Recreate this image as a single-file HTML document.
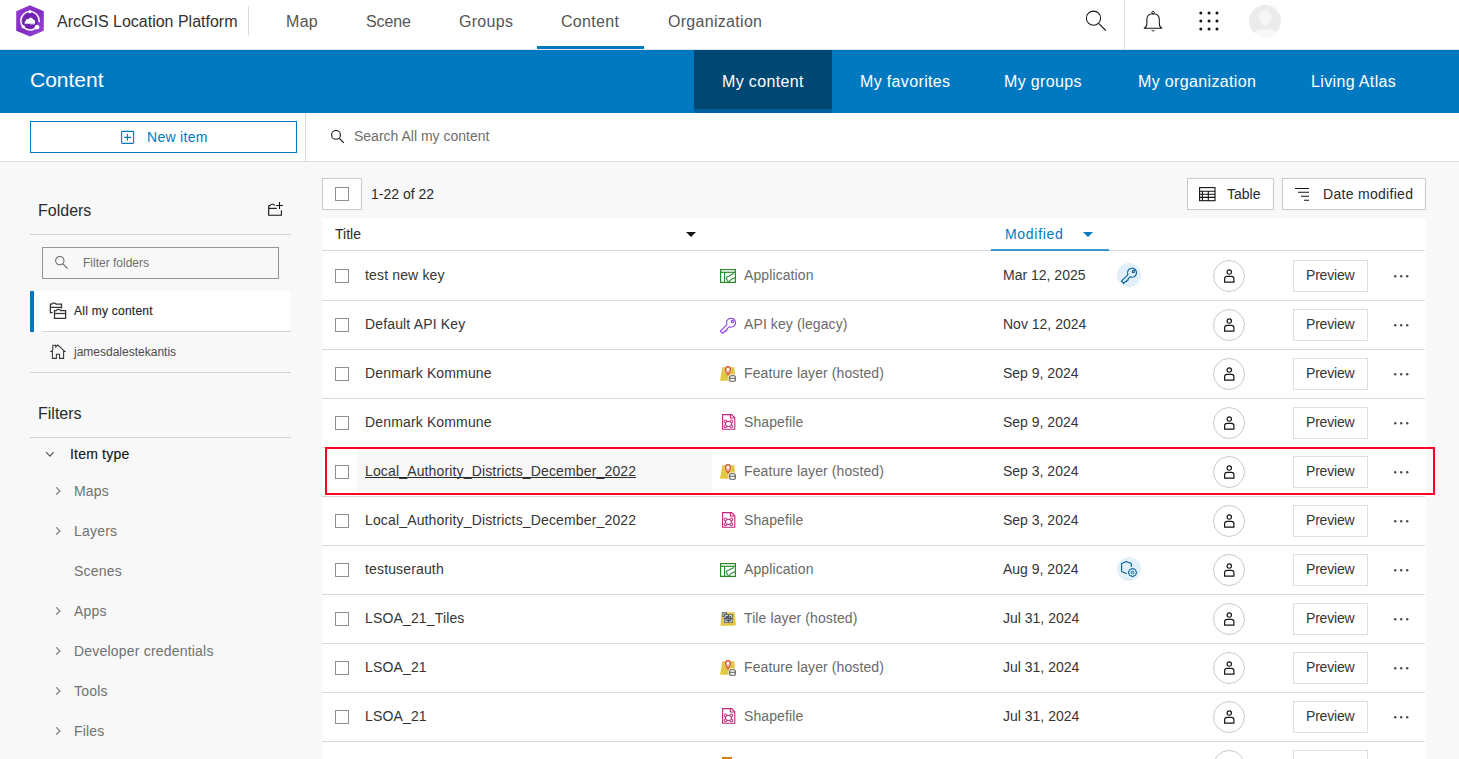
<!DOCTYPE html>
<html><head><meta charset="utf-8">
<style>
*{box-sizing:border-box;margin:0;padding:0}
html,body{width:1459px;height:759px;overflow:hidden;background:#f8f8f8;font-family:"Liberation Sans",sans-serif;color:#2a2a2a}
.a{position:absolute}
.t{position:absolute;white-space:nowrap;line-height:22px;height:22px}
svg{position:absolute;overflow:visible;z-index:1}
#hdr{left:0;top:0;width:1459px;height:50px;background:#fff;border-bottom:1px solid #e4e4e4}
.nav{font-size:16px;color:#555;letter-spacing:0.3px}
#sub{left:0;top:50px;width:1459px;height:63px;background:#0079c1}
.sn{font-size:16px;color:#fff;letter-spacing:0.35px}
#tb{left:0;top:113px;width:1459px;height:49px;background:#fff;border-bottom:1px solid #dfdfdf}
.f16{font-size:16px}
.f14{font-size:14px}
.f12{font-size:12px}
.hl{position:absolute;height:1px;background:#dadada}
.btn{position:absolute;background:#fff;border:1px solid #c9c9c9}
.cb{position:absolute;width:14px;height:14px;border:1px solid #8f8f8f;background:#fff}
.title{font-size:14px;color:#353535;letter-spacing:0.15px}
.type{font-size:14px;color:#6a6a6a;letter-spacing:0.1px}
.date{font-size:14px;color:#353535}
.share{position:absolute;width:32px;height:32px;border:1px solid #cacaca;border-radius:50%;background:#fff}
.prev{position:absolute;width:75px;height:32px;border:1px solid #dfdfdf;background:#fff}
.badge{position:absolute;width:24px;height:24px;border-radius:50%;background:#e2f0fa}
.fi{font-size:14px;color:#717171;letter-spacing:0.2px}
</style></head><body>

<!-- header -->
<div id="hdr" class="a"></div>
<div class="t nav" style="left:57px;top:11px;color:#323232;letter-spacing:0">ArcGIS Location Platform</div>
<div class="a" style="left:248px;top:6px;width:1px;height:30px;background:#dcdcdc"></div>
<div class="t nav" style="left:286px;top:11px">Map</div>
<div class="t nav" style="left:366px;top:11px;letter-spacing:-0.1px">Scene</div>
<div class="t nav" style="left:459px;top:11px">Groups</div>
<div class="t nav" style="left:561px;top:11px">Content</div>
<div class="t nav" style="left:668px;top:11px">Organization</div>
<div class="a" style="left:537px;top:46px;width:107px;height:3px;background:#0079c1"></div>
<div class="a" style="left:1124px;top:0;width:1px;height:49px;background:#e0e0e0"></div>


<svg style="left:0;top:0" width="60" height="45" viewBox="0 0 60 45">
<defs><linearGradient id="lg" x1="0" y1="0" x2="1" y2="1"><stop offset="0" stop-color="#9a3fd6"/><stop offset="0.5" stop-color="#7f2bc0"/><stop offset="1" stop-color="#9c48dc"/></linearGradient></defs>
<path d="M30 5.3 L43.8 11.3 L43.8 30.8 L30 36.6 L16.2 30.8 L16.2 11.3 Z" fill="url(#lg)"/>
<circle cx="30" cy="20.8" r="7.6" fill="#6f23ad"/>
<path d="M25.3 23.8 C24.3 23.6 24.2 21.6 25.6 21.2 C25.7 19.4 27.3 18.6 28.5 19.2 C29.4 17.3 32.5 17.4 33.2 19.6 C34.8 19.6 35.7 21.4 34.8 23.8 Z" fill="#fff"/>
<path d="M30 24.2 L34.9 24.2" stroke="#fff" stroke-width="0.5"/>
<circle cx="30" cy="20.8" r="9.2" fill="none" stroke="#fff" stroke-width="1.5" pathLength="360" stroke-dasharray="8 24 328"/>
<circle cx="30" cy="11.6" r="1.6" fill="#fff"/>
<circle cx="23.2" cy="26.8" r="1.7" fill="#fff"/>
<circle cx="37" cy="27.2" r="2.4" fill="#fff"/>
</svg>
<svg style="left:1080px;top:5px" width="30" height="30" viewBox="0 0 30 30">
<circle cx="13.5" cy="13.2" r="7.1" fill="none" stroke="#151515" stroke-width="1.05"/>
<path d="M18.6 18.4 L25.8 25.5" stroke="#151515" stroke-width="1.1"/>
</svg>
<svg style="left:1140px;top:5px" width="26" height="30" viewBox="0 0 26 30">
<circle cx="13.1" cy="7.7" r="1.3" fill="none" stroke="#151515" stroke-width="1"/>
<path d="M4.2 23.3 L21.8 23.3 C19.6 22.2 19.3 20.5 19.3 18.5 L19.3 14.2 C19.3 10.8 16.8 8.7 13.1 8.7 C9.4 8.7 6.9 10.8 6.9 14.2 L6.9 18.5 C6.9 20.5 6.6 22.2 4.2 23.3 Z" fill="none" stroke="#151515" stroke-width="1.05" stroke-linejoin="round"/>
<path d="M11.6 25.4 Q13.1 26.6 14.6 25.4" fill="none" stroke="#151515" stroke-width="0.9"/>
</svg>
<svg style="left:1195px;top:7px" width="28" height="28" viewBox="0 0 28 28">
<g fill="#151515"><circle cx="5.8" cy="6" r="1.5"/><circle cx="14" cy="6" r="1.5"/><circle cx="22" cy="6" r="1.5"/><circle cx="5.8" cy="14" r="1.5"/><circle cx="14" cy="14" r="1.5"/><circle cx="22" cy="14" r="1.5"/><circle cx="5.8" cy="22" r="1.5"/><circle cx="14" cy="22" r="1.5"/><circle cx="22" cy="22" r="1.5"/></g>
</svg>
<svg style="left:1249px;top:5px" width="32" height="32" viewBox="0 0 32 32">
<defs><clipPath id="avc"><circle cx="16" cy="16" r="16"/></clipPath></defs>
<circle cx="16" cy="16" r="16" fill="#ebebeb"/>
<g clip-path="url(#avc)">
<ellipse cx="16" cy="11.6" rx="6.8" ry="7.2" fill="#f3f3f3"/>
<ellipse cx="16" cy="13.6" rx="5" ry="6.8" fill="#f6f6f6"/>
<path d="M3 36 L4 29 C5 26 8.5 24.6 12 24.4 L20 24.4 C23.5 24.6 27 26 28 29 L29 36 Z" fill="#f8f8f8"/>
</g>
</svg>

<!-- sub nav -->
<div id="sub" class="a"></div>
<div class="a" style="left:694px;top:50px;width:138px;height:63px;background:#004874;border-bottom:4px solid #00609d"></div>
<div class="t" style="left:30px;top:69px;font-size:21px;color:#fff">Content</div>
<div class="t sn" style="left:722px;top:71px">My content</div>
<div class="t sn" style="left:860px;top:71px">My favorites</div>
<div class="t sn" style="left:1004px;top:71px">My groups</div>
<div class="t sn" style="left:1138px;top:71px">My organization</div>
<div class="t sn" style="left:1311px;top:71px">Living Atlas</div>

<!-- toolbar -->
<div id="tb" class="a"></div>
<div class="a" style="left:30px;top:121px;width:267px;height:32px;border:1px solid #0079c1"></div>
<div class="t f14" style="left:147px;top:126px;color:#0079c1;letter-spacing:0.3px">New item</div>
<div class="a" style="left:305px;top:113px;width:1px;height:48px;background:#d6d6d6"></div>
<div class="t f14" style="left:354px;top:125px;color:#6e6e6e">Search All my content</div>

<!-- left panel -->
<div class="t f16" style="left:38px;top:200px">Folders</div>
<div class="hl" style="left:30px;top:234px;width:261px;background:#d4d4d4"></div>
<div class="a" style="left:42px;top:247px;width:237px;height:32px;border:1px solid #959595"></div>
<div class="t f12" style="left:83px;top:252px;color:#6e6e6e">Filter folders</div>
<div class="a" style="left:30px;top:291px;width:261px;height:40px;background:#fff"></div>
<div class="a" style="left:30px;top:291px;width:4px;height:41px;background:#0079c1"></div>
<div class="t f12" style="left:74px;top:300px;-webkit-text-stroke:0.15px #151515;letter-spacing:0.25px">All my content</div>
<div class="hl" style="left:42px;top:331px;width:249px;background:#d4d4d4"></div>
<div class="t f12" style="left:74px;top:341px;color:#4a4a4a">jamesdalestekantis</div>
<div class="hl" style="left:30px;top:372px;width:261px;background:#d4d4d4"></div>
<div class="t f16" style="left:38px;top:403px">Filters</div>
<div class="hl" style="left:30px;top:437px;width:261px;background:#d4d4d4"></div>
<div class="t f14" style="left:70px;top:443px;-webkit-text-stroke:0.15px #151515;color:#151515;letter-spacing:0.2px">Item type</div>
<div class="t fi" style="left:74px;top:480px">Maps</div>
<div class="t fi" style="left:74px;top:520px">Layers</div>
<div class="t fi" style="left:74px;top:560px">Scenes</div>
<div class="t fi" style="left:74px;top:600px">Apps</div>
<div class="t fi" style="left:74px;top:640px">Developer credentials</div>
<div class="t fi" style="left:74px;top:680px">Tools</div>
<div class="t fi" style="left:74px;top:720px">Files</div>


<svg style="left:115px;top:125px" width="24" height="24" viewBox="0 0 24 24">
<rect x="6.6" y="6.4" width="12" height="12" rx="0.8" fill="none" stroke="#0079c1" stroke-width="1.1"/>
<path d="M12.4 9 L12.4 15.8 M9.3 12.4 L16 12.4" stroke="#0079c1" stroke-width="1.1"/>
</svg>
<svg style="left:325px;top:125px" width="25" height="25" viewBox="0 0 25 25">
<circle cx="11" cy="9.9" r="4.4" fill="none" stroke="#151515" stroke-width="1.1"/>
<path d="M14.3 13.3 L18.8 17.8" stroke="#151515" stroke-width="1.2"/>
</svg>
<svg style="left:258px;top:195px" width="34" height="30" viewBox="0 0 34 30">
<path d="M10.7 10.5 L10.7 20.2 L23.4 20.2 L23.4 15.2" fill="none" stroke="#151515" stroke-width="1.1"/>
<path d="M10.7 13.4 L18.8 13.4" stroke="#151515" stroke-width="1.1"/>
<path d="M10.7 10.6 L12 10.6 C12.4 9.6 12.8 9.3 14 9.3 L15.2 9.3 C16 9.3 16.3 9.7 16.4 10.6" fill="none" stroke="#151515" stroke-width="1.1"/>
<path d="M21.5 7.1 L21.5 13.9 M18.2 10.5 L25 10.5" stroke="#151515" stroke-width="1.1"/>
</svg>
<svg style="left:50px;top:251px" width="24" height="24" viewBox="0 0 24 24">
<circle cx="9.8" cy="9.6" r="4.2" fill="none" stroke="#6a6a6a" stroke-width="1.05"/>
<path d="M12.9 12.8 L17.6 17.6" stroke="#6a6a6a" stroke-width="1.1"/>
</svg>
<svg style="left:45px;top:298px" width="25" height="25" viewBox="0 0 25 25">
<g fill="none" stroke="#333" stroke-width="1.25">
<path d="M7.6 14.5 L5.4 14.5 L5.4 6 L6.8 6 C7.3 5.2 7.7 5 8.6 5 L9.6 5 C10.4 5 10.8 5.4 11.2 6.2 L16.5 6.2 L16.5 10.5"/>
<path d="M5.4 9.4 L16.5 9.4"/>
<path d="M9.5 12.5 L9.5 20.4 L20.6 20.4 L20.6 12.5 L15.6 12.5 C15.2 11.7 14.8 11.3 14 11.3 L13 11.3 C12 11.3 11.7 11.6 11.2 12.5 Z"/>
<path d="M9.5 15.5 L20.6 15.5"/>
</g>
</svg>
<svg style="left:45px;top:339px" width="25" height="25" viewBox="0 0 25 25">
<path d="M7.4 19.4 L7.4 12.4 L6.1 12.4 L7.8 10.8 L7.8 6.3 L10.7 6.3 L10.7 8 L12.8 6.1 L19.8 12.4 L18.6 12.4 L18.6 19.4 L14.5 19.4 L14.5 15.3 L11.4 15.3 L11.4 19.4 Z" fill="none" stroke="#3a3a3a" stroke-width="1.1" stroke-linejoin="miter"/>
</svg>
<svg style="left:40px;top:445px" width="20" height="20" viewBox="0 0 20 20">
<path d="M6.2 7.2 L9.9 11.2 L13.6 7.2" fill="none" stroke="#555" stroke-width="1.2"/>
</svg>
<svg style="left:1195px;top:183px" width="25" height="22" viewBox="0 0 25 22">
<g fill="none" stroke="#151515" stroke-width="1.1">
<rect x="4.6" y="4.6" width="15.4" height="13.1"/>
<path d="M4.8 8.3 L20.2 8.3 M4.8 11.3 L20.2 11.3 M4.8 14.4 L20.2 14.4 M7.4 8.3 L7.4 18 M13.3 8.3 L13.3 18"/>
</g>
</svg>
<svg style="left:1290px;top:183px" width="25" height="22" viewBox="0 0 25 22">
<path d="M5 5.5 L19 5.5 M8 9.3 L19 9.3 M11 13.3 L19 13.3 M14 17.3 L19 17.3" stroke="#151515" stroke-width="1.1"/>
</svg>
<svg style="left:680px;top:225px" width="20" height="20" viewBox="0 0 20 20">
<path d="M6 7 L16 7 L11 12 Z" fill="#151515"/>
</svg>
<svg style="left:1080px;top:225px" width="20" height="20" viewBox="0 0 20 20">
<path d="M3 7 L13 7 L8 12 Z" fill="#0079c1"/>
</svg>
<svg style="left:50px;top:480px" width="20" height="20" viewBox="0 0 20 20"><path d="M6.3 7.4 L10 11 L6.3 14.5" fill="none" stroke="#777" stroke-width="1.15"/></svg>
<svg style="left:50px;top:520px" width="20" height="20" viewBox="0 0 20 20"><path d="M6.3 7.4 L10 11 L6.3 14.5" fill="none" stroke="#777" stroke-width="1.15"/></svg>
<svg style="left:50px;top:600px" width="20" height="20" viewBox="0 0 20 20"><path d="M6.3 7.4 L10 11 L6.3 14.5" fill="none" stroke="#777" stroke-width="1.15"/></svg>
<svg style="left:50px;top:640px" width="20" height="20" viewBox="0 0 20 20"><path d="M6.3 7.4 L10 11 L6.3 14.5" fill="none" stroke="#777" stroke-width="1.15"/></svg>
<svg style="left:50px;top:680px" width="20" height="20" viewBox="0 0 20 20"><path d="M6.3 7.4 L10 11 L6.3 14.5" fill="none" stroke="#777" stroke-width="1.15"/></svg>
<svg style="left:50px;top:720px" width="20" height="20" viewBox="0 0 20 20"><path d="M6.3 7.4 L10 11 L6.3 14.5" fill="none" stroke="#777" stroke-width="1.15"/></svg>

<!-- table top -->
<div class="btn" style="left:322px;top:178px;width:40px;height:32px"></div>
<div class="cb" style="left:335px;top:187px"></div>
<div class="t f14" style="left:371px;top:183px">1-22 of 22</div>
<div class="btn" style="left:1187px;top:178px;width:87px;height:32px"></div>
<div class="t f14" style="left:1227px;top:183px">Table</div>
<div class="btn" style="left:1282px;top:178px;width:144px;height:32px"></div>
<div class="t f14" style="left:1323px;top:183px;letter-spacing:0.3px">Date modified</div>

<div class="a" style="left:322px;top:218px;width:1104px;height:541px;background:#fff"></div>
<div class="t f14" style="left:335px;top:223px">Title</div>
<div class="t f14" style="left:1005px;top:223px;color:#0079c1;letter-spacing:0.7px">Modified</div>
<div class="hl" style="left:322px;top:250px;width:1103px"></div>
<div class="a" style="left:991px;top:249px;width:118px;height:2px;background:#0079c1;opacity:0.75"></div>

<div class="cb" style="left:335px;top:269px"></div>
<div class="t title" style="left:365px;top:264px;font-size:14px;">test new key</div>
<svg style="left:720px;top:269px" width="16" height="14" viewBox="0 0 16 14"><rect x="0.6" y="0.6" width="14.8" height="12.8" fill="none" stroke="#2b8a2b" stroke-width="1.2"/><line x1="0.6" y1="3.3" x2="15.4" y2="3.3" stroke="#2b8a2b" stroke-width="1.2"/><line x1="4.6" y1="3.3" x2="4.6" y2="13.4" stroke="#2b8a2b" stroke-width="1.2"/><path d="M13.6 3.5 L12.6 5.5 L10.5 6 L8.8 7.2 L7.3 7.4 L6.4 9 L7 10.4 L7.6 11.5 L8.4 13.2 M9.4 13.2 L10 11.5 L11.8 10 L13.4 9.6 L14.8 8.5" fill="none" stroke="#2b8a2b" stroke-width="1.1"/></svg>
<div class="t type" style="left:744px;top:264px">Application</div>
<div class="t date" style="left:1003px;top:264px">Mar 12, 2025</div>
<div class="badge" style="left:1117px;top:263px"></div>
<svg style="left:1121px;top:266px" width="17" height="18" viewBox="0 0 17 18"><path d="M6.90 8.55 A4.5 4.5 0 1 1 9.16 10.80 L7.03 12.92 L7.03 14.2 L5.73 14.2 L5.73 15.5 L4.43 15.5 L2.65 17.31 L0.39 15.05 Z" fill="none" stroke="#005e95" stroke-width="1.1" stroke-linejoin="round"/><circle cx="12.4" cy="5.5" r="1.1" fill="none" stroke="#005e95" stroke-width="1.1"/></svg>
<div class="share" style="left:1213px;top:260px"></div>
<svg style="left:1224px;top:269px" width="11" height="14" viewBox="0 0 11 14"><circle cx="5.25" cy="3" r="2.2" fill="none" stroke="#151515" stroke-width="1.15"/><path d="M0.6 13.2 L0.6 9.8 C0.6 8.1 1.6 7.3 3.1 7.3 L7.4 7.3 C8.9 7.3 9.9 8.1 9.9 9.8 L9.9 13.2 Z" fill="none" stroke="#151515" stroke-width="1.2" stroke-linejoin="round"/></svg>
<div class="prev" style="left:1293px;top:260px"></div>
<div class="t date" style="left:1306px;top:264px;letter-spacing:-0.2px">Preview</div>
<svg style="left:1394px;top:275px" width="15" height="3" viewBox="0 0 15 3"><circle cx="1.2" cy="1.2" r="1.2" fill="#4a4a4a"/><circle cx="7.2" cy="1.2" r="1.2" fill="#4a4a4a"/><circle cx="13.2" cy="1.2" r="1.2" fill="#4a4a4a"/></svg>
<div class="hl" style="left:322px;top:300px;width:1103px"></div>
<div class="cb" style="left:335px;top:318px"></div>
<div class="t title" style="left:365px;top:313px;font-size:14px;">Default API Key</div>
<svg style="left:720px;top:316px" width="17" height="18" viewBox="0 0 17 18"><path d="M6.90 8.55 A4.5 4.5 0 1 1 9.16 10.80 L7.03 12.92 L7.03 14.2 L5.73 14.2 L5.73 15.5 L4.43 15.5 L2.65 17.31 L0.39 15.05 Z" fill="none" stroke="#8d3ee0" stroke-width="1.1" stroke-linejoin="round"/><circle cx="12.4" cy="5.5" r="1.1" fill="none" stroke="#8d3ee0" stroke-width="1.1"/></svg>
<div class="t type" style="left:744px;top:313px">API key (legacy)</div>
<div class="t date" style="left:1003px;top:313px">Nov 12, 2024</div>
<div class="share" style="left:1213px;top:309px"></div>
<svg style="left:1224px;top:318px" width="11" height="14" viewBox="0 0 11 14"><circle cx="5.25" cy="3" r="2.2" fill="none" stroke="#151515" stroke-width="1.15"/><path d="M0.6 13.2 L0.6 9.8 C0.6 8.1 1.6 7.3 3.1 7.3 L7.4 7.3 C8.9 7.3 9.9 8.1 9.9 9.8 L9.9 13.2 Z" fill="none" stroke="#151515" stroke-width="1.2" stroke-linejoin="round"/></svg>
<div class="prev" style="left:1293px;top:309px"></div>
<div class="t date" style="left:1306px;top:313px;letter-spacing:-0.2px">Preview</div>
<svg style="left:1394px;top:324px" width="15" height="3" viewBox="0 0 15 3"><circle cx="1.2" cy="1.2" r="1.2" fill="#4a4a4a"/><circle cx="7.2" cy="1.2" r="1.2" fill="#4a4a4a"/><circle cx="13.2" cy="1.2" r="1.2" fill="#4a4a4a"/></svg>
<div class="hl" style="left:322px;top:349px;width:1103px"></div>
<div class="cb" style="left:335px;top:367px"></div>
<div class="t title" style="left:365px;top:362px;font-size:14px;">Denmark Kommune</div>
<svg style="left:720px;top:366px" width="16" height="16" viewBox="0 0 16 16"><path d="M0 14.7 L2.3 1.3 L14.3 1.3 L15.2 9 L15.2 14.7 Z" fill="#e2c842"/><path d="M8 9.6 C6.4 7.7 4.6 6 4.6 3.7 C4.6 1.4 6.2 -0.3 8 -0.3 C9.8 -0.3 11.4 1.4 11.4 3.7 C11.4 6 9.6 7.7 8 9.6 Z" fill="#fff"/><path d="M8 8.9 C6.8 7.4 5.5 6 5.5 3.8 C5.5 2 6.6 0.6 8 0.6 C9.4 0.6 10.5 2 10.5 3.8 C10.5 6 9.2 7.4 8 8.9 Z" fill="#fbe9e4" stroke="#d4502a" stroke-width="1.3"/><circle cx="8" cy="3" r="1" fill="#fff"/><path d="M8 4.4 L8 7" stroke="#e58a70" stroke-width="1"/><rect x="8.6" y="8.6" width="7.8" height="7.6" rx="2" fill="#fff"/><rect x="9.7" y="9.7" width="5.6" height="5.5" rx="1.3" fill="#fff" stroke="#5a5a5a" stroke-width="1.1"/><line x1="9.8" y1="12.3" x2="15.2" y2="12.3" stroke="#5a5a5a" stroke-width="1"/></svg>
<div class="t type" style="left:744px;top:362px">Feature layer (hosted)</div>
<div class="t date" style="left:1003px;top:362px">Sep 9, 2024</div>
<div class="share" style="left:1213px;top:358px"></div>
<svg style="left:1224px;top:367px" width="11" height="14" viewBox="0 0 11 14"><circle cx="5.25" cy="3" r="2.2" fill="none" stroke="#151515" stroke-width="1.15"/><path d="M0.6 13.2 L0.6 9.8 C0.6 8.1 1.6 7.3 3.1 7.3 L7.4 7.3 C8.9 7.3 9.9 8.1 9.9 9.8 L9.9 13.2 Z" fill="none" stroke="#151515" stroke-width="1.2" stroke-linejoin="round"/></svg>
<div class="prev" style="left:1293px;top:358px"></div>
<div class="t date" style="left:1306px;top:362px;letter-spacing:-0.2px">Preview</div>
<svg style="left:1394px;top:373px" width="15" height="3" viewBox="0 0 15 3"><circle cx="1.2" cy="1.2" r="1.2" fill="#4a4a4a"/><circle cx="7.2" cy="1.2" r="1.2" fill="#4a4a4a"/><circle cx="13.2" cy="1.2" r="1.2" fill="#4a4a4a"/></svg>
<div class="hl" style="left:322px;top:398px;width:1103px"></div>
<div class="cb" style="left:335px;top:416px"></div>
<div class="t title" style="left:365px;top:411px;font-size:14px;">Denmark Kommune</div>
<svg style="left:722px;top:414px" width="14" height="16" viewBox="0 0 14 16"><path d="M0.6 0.6 L9.6 0.6 L12.8 3.8 L12.8 15.2 L0.6 15.2 Z" fill="#fff" stroke="#c0267a" stroke-width="1.1"/><path d="M8.4 0.8 L8.4 4 L12.6 4" fill="none" stroke="#c0267a" stroke-width="1.1"/><rect x="2.2" y="6.1000000000000005" width="2.6" height="2.6" rx="0.7" fill="none" stroke="#c0267a" stroke-width="1"/><rect x="8.1" y="6.1000000000000005" width="2.6" height="2.6" rx="0.7" fill="none" stroke="#c0267a" stroke-width="1"/><rect x="2.2" y="11.1" width="2.6" height="2.6" rx="0.7" fill="none" stroke="#c0267a" stroke-width="1"/><rect x="8.1" y="11.1" width="2.6" height="2.6" rx="0.7" fill="none" stroke="#c0267a" stroke-width="1"/><path d="M4.8 7.4 L8.1 7.4 M4.8 12.4 L8.1 12.4 M3.5 8.7 L3.5 11.1 M9.4 8.7 L9.4 11.1" stroke="#c0267a" stroke-width="1"/></svg>
<div class="t type" style="left:744px;top:411px">Shapefile</div>
<div class="t date" style="left:1003px;top:411px">Sep 9, 2024</div>
<div class="share" style="left:1213px;top:407px"></div>
<svg style="left:1224px;top:416px" width="11" height="14" viewBox="0 0 11 14"><circle cx="5.25" cy="3" r="2.2" fill="none" stroke="#151515" stroke-width="1.15"/><path d="M0.6 13.2 L0.6 9.8 C0.6 8.1 1.6 7.3 3.1 7.3 L7.4 7.3 C8.9 7.3 9.9 8.1 9.9 9.8 L9.9 13.2 Z" fill="none" stroke="#151515" stroke-width="1.2" stroke-linejoin="round"/></svg>
<div class="prev" style="left:1293px;top:407px"></div>
<div class="t date" style="left:1306px;top:411px;letter-spacing:-0.2px">Preview</div>
<svg style="left:1394px;top:422px" width="15" height="3" viewBox="0 0 15 3"><circle cx="1.2" cy="1.2" r="1.2" fill="#4a4a4a"/><circle cx="7.2" cy="1.2" r="1.2" fill="#4a4a4a"/><circle cx="13.2" cy="1.2" r="1.2" fill="#4a4a4a"/></svg>
<div class="hl" style="left:322px;top:447px;width:1103px"></div>
<div class="a" style="left:357px;top:449px;width:355px;height:43px;background:#f8f8f8"></div>
<div class="a" style="left:365px;top:477px;width:271px;height:1px;background:#2a2a2a"></div>
<div class="cb" style="left:335px;top:465px"></div>
<div class="t title" style="left:365px;top:460px;font-size:14px;">Local_Authority_Districts_December_2022</div>
<svg style="left:720px;top:464px" width="16" height="16" viewBox="0 0 16 16"><path d="M0 14.7 L2.3 1.3 L14.3 1.3 L15.2 9 L15.2 14.7 Z" fill="#e2c842"/><path d="M8 9.6 C6.4 7.7 4.6 6 4.6 3.7 C4.6 1.4 6.2 -0.3 8 -0.3 C9.8 -0.3 11.4 1.4 11.4 3.7 C11.4 6 9.6 7.7 8 9.6 Z" fill="#fff"/><path d="M8 8.9 C6.8 7.4 5.5 6 5.5 3.8 C5.5 2 6.6 0.6 8 0.6 C9.4 0.6 10.5 2 10.5 3.8 C10.5 6 9.2 7.4 8 8.9 Z" fill="#fbe9e4" stroke="#d4502a" stroke-width="1.3"/><circle cx="8" cy="3" r="1" fill="#fff"/><path d="M8 4.4 L8 7" stroke="#e58a70" stroke-width="1"/><rect x="8.6" y="8.6" width="7.8" height="7.6" rx="2" fill="#fff"/><rect x="9.7" y="9.7" width="5.6" height="5.5" rx="1.3" fill="#fff" stroke="#5a5a5a" stroke-width="1.1"/><line x1="9.8" y1="12.3" x2="15.2" y2="12.3" stroke="#5a5a5a" stroke-width="1"/></svg>
<div class="t type" style="left:744px;top:460px">Feature layer (hosted)</div>
<div class="t date" style="left:1003px;top:460px">Sep 3, 2024</div>
<div class="share" style="left:1213px;top:456px"></div>
<svg style="left:1224px;top:465px" width="11" height="14" viewBox="0 0 11 14"><circle cx="5.25" cy="3" r="2.2" fill="none" stroke="#151515" stroke-width="1.15"/><path d="M0.6 13.2 L0.6 9.8 C0.6 8.1 1.6 7.3 3.1 7.3 L7.4 7.3 C8.9 7.3 9.9 8.1 9.9 9.8 L9.9 13.2 Z" fill="none" stroke="#151515" stroke-width="1.2" stroke-linejoin="round"/></svg>
<div class="prev" style="left:1293px;top:456px"></div>
<div class="t date" style="left:1306px;top:460px;letter-spacing:-0.2px">Preview</div>
<svg style="left:1394px;top:471px" width="15" height="3" viewBox="0 0 15 3"><circle cx="1.2" cy="1.2" r="1.2" fill="#4a4a4a"/><circle cx="7.2" cy="1.2" r="1.2" fill="#4a4a4a"/><circle cx="13.2" cy="1.2" r="1.2" fill="#4a4a4a"/></svg>
<div class="hl" style="left:322px;top:496px;width:1103px"></div>
<div class="cb" style="left:335px;top:514px"></div>
<div class="t title" style="left:365px;top:509px;font-size:14px;">Local_Authority_Districts_December_2022</div>
<svg style="left:722px;top:512px" width="14" height="16" viewBox="0 0 14 16"><path d="M0.6 0.6 L9.6 0.6 L12.8 3.8 L12.8 15.2 L0.6 15.2 Z" fill="#fff" stroke="#c0267a" stroke-width="1.1"/><path d="M8.4 0.8 L8.4 4 L12.6 4" fill="none" stroke="#c0267a" stroke-width="1.1"/><rect x="2.2" y="6.1000000000000005" width="2.6" height="2.6" rx="0.7" fill="none" stroke="#c0267a" stroke-width="1"/><rect x="8.1" y="6.1000000000000005" width="2.6" height="2.6" rx="0.7" fill="none" stroke="#c0267a" stroke-width="1"/><rect x="2.2" y="11.1" width="2.6" height="2.6" rx="0.7" fill="none" stroke="#c0267a" stroke-width="1"/><rect x="8.1" y="11.1" width="2.6" height="2.6" rx="0.7" fill="none" stroke="#c0267a" stroke-width="1"/><path d="M4.8 7.4 L8.1 7.4 M4.8 12.4 L8.1 12.4 M3.5 8.7 L3.5 11.1 M9.4 8.7 L9.4 11.1" stroke="#c0267a" stroke-width="1"/></svg>
<div class="t type" style="left:744px;top:509px">Shapefile</div>
<div class="t date" style="left:1003px;top:509px">Sep 3, 2024</div>
<div class="share" style="left:1213px;top:505px"></div>
<svg style="left:1224px;top:514px" width="11" height="14" viewBox="0 0 11 14"><circle cx="5.25" cy="3" r="2.2" fill="none" stroke="#151515" stroke-width="1.15"/><path d="M0.6 13.2 L0.6 9.8 C0.6 8.1 1.6 7.3 3.1 7.3 L7.4 7.3 C8.9 7.3 9.9 8.1 9.9 9.8 L9.9 13.2 Z" fill="none" stroke="#151515" stroke-width="1.2" stroke-linejoin="round"/></svg>
<div class="prev" style="left:1293px;top:505px"></div>
<div class="t date" style="left:1306px;top:509px;letter-spacing:-0.2px">Preview</div>
<svg style="left:1394px;top:520px" width="15" height="3" viewBox="0 0 15 3"><circle cx="1.2" cy="1.2" r="1.2" fill="#4a4a4a"/><circle cx="7.2" cy="1.2" r="1.2" fill="#4a4a4a"/><circle cx="13.2" cy="1.2" r="1.2" fill="#4a4a4a"/></svg>
<div class="hl" style="left:322px;top:545px;width:1103px"></div>
<div class="cb" style="left:335px;top:563px"></div>
<div class="t title" style="left:365px;top:558px;font-size:14px;">testuserauth</div>
<svg style="left:720px;top:563px" width="16" height="14" viewBox="0 0 16 14"><rect x="0.6" y="0.6" width="14.8" height="12.8" fill="none" stroke="#2b8a2b" stroke-width="1.2"/><line x1="0.6" y1="3.3" x2="15.4" y2="3.3" stroke="#2b8a2b" stroke-width="1.2"/><line x1="4.6" y1="3.3" x2="4.6" y2="13.4" stroke="#2b8a2b" stroke-width="1.2"/><path d="M13.6 3.5 L12.6 5.5 L10.5 6 L8.8 7.2 L7.3 7.4 L6.4 9 L7 10.4 L7.6 11.5 L8.4 13.2 M9.4 13.2 L10 11.5 L11.8 10 L13.4 9.6 L14.8 8.5" fill="none" stroke="#2b8a2b" stroke-width="1.1"/></svg>
<div class="t type" style="left:744px;top:558px">Application</div>
<div class="t date" style="left:1003px;top:558px">Aug 9, 2024</div>
<div class="badge" style="left:1117px;top:557px"></div>
<svg style="left:1121px;top:561px" width="16" height="16" viewBox="0 0 16 16"><path d="M10.3 5.4 L10.3 2.4 L5.3 0.5 L0.6 2.4 L0.6 10.4 L5.3 12.5" fill="none" stroke="#005e95" stroke-width="1.1" stroke-linecap="round" stroke-linejoin="round"/><path d="M14.38 10.35 L15.62 10.67 L15.62 12.33 L14.38 12.65 L14.35 12.72 L15.00 13.82 L13.82 15.00 L12.72 14.35 L12.65 14.38 L12.33 15.62 L10.67 15.62 L10.35 14.38 L10.28 14.35 L9.18 15.00 L8.00 13.82 L8.65 12.72 L8.62 12.65 L7.38 12.33 L7.38 10.67 L8.62 10.35 L8.65 10.28 L8.00 9.18 L9.18 8.00 L10.28 8.65 L10.35 8.62 L10.67 7.38 L12.33 7.38 L12.65 8.62 L12.72 8.65 L13.82 8.00 L15.00 9.18 L14.35 10.28 Z" fill="#e2f0fa" stroke="#005e95" stroke-width="1" stroke-linejoin="round"/><circle cx="11.5" cy="11.5" r="1.3" fill="none" stroke="#005e95" stroke-width="1"/></svg>
<div class="share" style="left:1213px;top:554px"></div>
<svg style="left:1224px;top:563px" width="11" height="14" viewBox="0 0 11 14"><circle cx="5.25" cy="3" r="2.2" fill="none" stroke="#151515" stroke-width="1.15"/><path d="M0.6 13.2 L0.6 9.8 C0.6 8.1 1.6 7.3 3.1 7.3 L7.4 7.3 C8.9 7.3 9.9 8.1 9.9 9.8 L9.9 13.2 Z" fill="none" stroke="#151515" stroke-width="1.2" stroke-linejoin="round"/></svg>
<div class="prev" style="left:1293px;top:554px"></div>
<div class="t date" style="left:1306px;top:558px;letter-spacing:-0.2px">Preview</div>
<svg style="left:1394px;top:569px" width="15" height="3" viewBox="0 0 15 3"><circle cx="1.2" cy="1.2" r="1.2" fill="#4a4a4a"/><circle cx="7.2" cy="1.2" r="1.2" fill="#4a4a4a"/><circle cx="13.2" cy="1.2" r="1.2" fill="#4a4a4a"/></svg>
<div class="hl" style="left:322px;top:594px;width:1103px"></div>
<div class="cb" style="left:335px;top:612px"></div>
<div class="t title" style="left:365px;top:607px;font-size:14px;">LSOA_21_Tiles</div>
<svg style="left:720px;top:611px" width="16" height="15" viewBox="0 0 16 15"><path d="M0.4 14.7 L1.6 1.6 L14.6 1.3 L15.8 12.6 L15.6 14.4 L8 14.8 Z" fill="#e2c842"/><rect x="2.1" y="1" width="4.8" height="4.8" fill="#4e5660"/><path d="M3.2 4.9 L3.2 2.1 L5.8 2.1" fill="none" stroke="#dff2e6" stroke-width="0.9"/><circle cx="5.2" cy="4.1" r="0.55" fill="#fff"/><rect x="3.6" y="2.8" width="1" height="1" fill="#fff" opacity="0"/><rect x="4.1" y="3.3" width="8.7" height="8.5" fill="#4e5660"/><path d="M5.2 7 L5.2 4.4 L7.9 4.4 M9.1 4.4 L11.7 4.4 L11.7 7 M11.7 8.2 L11.7 10.7 L9.1 10.7 M7.9 10.7 L5.2 10.7 L5.2 8.2" fill="none" stroke="#dff2e6" stroke-width="0.9"/><circle cx="7.2" cy="8.3" r="0.55" fill="#fff"/><circle cx="9.6" cy="8.3" r="0.55" fill="#fff"/><circle cx="9.6" cy="6" r="0.55" fill="#fff"/></svg>
<div class="t type" style="left:744px;top:607px">Tile layer (hosted)</div>
<div class="t date" style="left:1003px;top:607px">Jul 31, 2024</div>
<div class="share" style="left:1213px;top:603px"></div>
<svg style="left:1224px;top:612px" width="11" height="14" viewBox="0 0 11 14"><circle cx="5.25" cy="3" r="2.2" fill="none" stroke="#151515" stroke-width="1.15"/><path d="M0.6 13.2 L0.6 9.8 C0.6 8.1 1.6 7.3 3.1 7.3 L7.4 7.3 C8.9 7.3 9.9 8.1 9.9 9.8 L9.9 13.2 Z" fill="none" stroke="#151515" stroke-width="1.2" stroke-linejoin="round"/></svg>
<div class="prev" style="left:1293px;top:603px"></div>
<div class="t date" style="left:1306px;top:607px;letter-spacing:-0.2px">Preview</div>
<svg style="left:1394px;top:618px" width="15" height="3" viewBox="0 0 15 3"><circle cx="1.2" cy="1.2" r="1.2" fill="#4a4a4a"/><circle cx="7.2" cy="1.2" r="1.2" fill="#4a4a4a"/><circle cx="13.2" cy="1.2" r="1.2" fill="#4a4a4a"/></svg>
<div class="hl" style="left:322px;top:643px;width:1103px"></div>
<div class="cb" style="left:335px;top:661px"></div>
<div class="t title" style="left:365px;top:656px;font-size:14px;">LSOA_21</div>
<svg style="left:720px;top:660px" width="16" height="16" viewBox="0 0 16 16"><path d="M0 14.7 L2.3 1.3 L14.3 1.3 L15.2 9 L15.2 14.7 Z" fill="#e2c842"/><path d="M8 9.6 C6.4 7.7 4.6 6 4.6 3.7 C4.6 1.4 6.2 -0.3 8 -0.3 C9.8 -0.3 11.4 1.4 11.4 3.7 C11.4 6 9.6 7.7 8 9.6 Z" fill="#fff"/><path d="M8 8.9 C6.8 7.4 5.5 6 5.5 3.8 C5.5 2 6.6 0.6 8 0.6 C9.4 0.6 10.5 2 10.5 3.8 C10.5 6 9.2 7.4 8 8.9 Z" fill="#fbe9e4" stroke="#d4502a" stroke-width="1.3"/><circle cx="8" cy="3" r="1" fill="#fff"/><path d="M8 4.4 L8 7" stroke="#e58a70" stroke-width="1"/><rect x="8.6" y="8.6" width="7.8" height="7.6" rx="2" fill="#fff"/><rect x="9.7" y="9.7" width="5.6" height="5.5" rx="1.3" fill="#fff" stroke="#5a5a5a" stroke-width="1.1"/><line x1="9.8" y1="12.3" x2="15.2" y2="12.3" stroke="#5a5a5a" stroke-width="1"/></svg>
<div class="t type" style="left:744px;top:656px">Feature layer (hosted)</div>
<div class="t date" style="left:1003px;top:656px">Jul 31, 2024</div>
<div class="share" style="left:1213px;top:652px"></div>
<svg style="left:1224px;top:661px" width="11" height="14" viewBox="0 0 11 14"><circle cx="5.25" cy="3" r="2.2" fill="none" stroke="#151515" stroke-width="1.15"/><path d="M0.6 13.2 L0.6 9.8 C0.6 8.1 1.6 7.3 3.1 7.3 L7.4 7.3 C8.9 7.3 9.9 8.1 9.9 9.8 L9.9 13.2 Z" fill="none" stroke="#151515" stroke-width="1.2" stroke-linejoin="round"/></svg>
<div class="prev" style="left:1293px;top:652px"></div>
<div class="t date" style="left:1306px;top:656px;letter-spacing:-0.2px">Preview</div>
<svg style="left:1394px;top:667px" width="15" height="3" viewBox="0 0 15 3"><circle cx="1.2" cy="1.2" r="1.2" fill="#4a4a4a"/><circle cx="7.2" cy="1.2" r="1.2" fill="#4a4a4a"/><circle cx="13.2" cy="1.2" r="1.2" fill="#4a4a4a"/></svg>
<div class="hl" style="left:322px;top:692px;width:1103px"></div>
<div class="cb" style="left:335px;top:710px"></div>
<div class="t title" style="left:365px;top:705px;font-size:14px;">LSOA_21</div>
<svg style="left:722px;top:708px" width="14" height="16" viewBox="0 0 14 16"><path d="M0.6 0.6 L9.6 0.6 L12.8 3.8 L12.8 15.2 L0.6 15.2 Z" fill="#fff" stroke="#c0267a" stroke-width="1.1"/><path d="M8.4 0.8 L8.4 4 L12.6 4" fill="none" stroke="#c0267a" stroke-width="1.1"/><rect x="2.2" y="6.1000000000000005" width="2.6" height="2.6" rx="0.7" fill="none" stroke="#c0267a" stroke-width="1"/><rect x="8.1" y="6.1000000000000005" width="2.6" height="2.6" rx="0.7" fill="none" stroke="#c0267a" stroke-width="1"/><rect x="2.2" y="11.1" width="2.6" height="2.6" rx="0.7" fill="none" stroke="#c0267a" stroke-width="1"/><rect x="8.1" y="11.1" width="2.6" height="2.6" rx="0.7" fill="none" stroke="#c0267a" stroke-width="1"/><path d="M4.8 7.4 L8.1 7.4 M4.8 12.4 L8.1 12.4 M3.5 8.7 L3.5 11.1 M9.4 8.7 L9.4 11.1" stroke="#c0267a" stroke-width="1"/></svg>
<div class="t type" style="left:744px;top:705px">Shapefile</div>
<div class="t date" style="left:1003px;top:705px">Jul 31, 2024</div>
<div class="share" style="left:1213px;top:701px"></div>
<svg style="left:1224px;top:710px" width="11" height="14" viewBox="0 0 11 14"><circle cx="5.25" cy="3" r="2.2" fill="none" stroke="#151515" stroke-width="1.15"/><path d="M0.6 13.2 L0.6 9.8 C0.6 8.1 1.6 7.3 3.1 7.3 L7.4 7.3 C8.9 7.3 9.9 8.1 9.9 9.8 L9.9 13.2 Z" fill="none" stroke="#151515" stroke-width="1.2" stroke-linejoin="round"/></svg>
<div class="prev" style="left:1293px;top:701px"></div>
<div class="t date" style="left:1306px;top:705px;letter-spacing:-0.2px">Preview</div>
<svg style="left:1394px;top:716px" width="15" height="3" viewBox="0 0 15 3"><circle cx="1.2" cy="1.2" r="1.2" fill="#4a4a4a"/><circle cx="7.2" cy="1.2" r="1.2" fill="#4a4a4a"/><circle cx="13.2" cy="1.2" r="1.2" fill="#4a4a4a"/></svg>
<div class="hl" style="left:322px;top:741px;width:1103px"></div>
<div class="cb" style="left:335px;top:759px"></div>
<div class="t title" style="left:365px;top:754px;font-size:14px;">LSOA_21_Tiles_vt</div>
<div class="a" style="left:722px;top:757px;width:10px;height:14px;background:#e07a10"></div>
<div class="t type" style="left:744px;top:754px">Vector tile layer (hosted)</div>
<div class="t date" style="left:1003px;top:754px">Jul 31, 2024</div>
<div class="share" style="left:1213px;top:750px"></div>
<svg style="left:1224px;top:759px" width="11" height="14" viewBox="0 0 11 14"><circle cx="5.25" cy="3" r="2.2" fill="none" stroke="#151515" stroke-width="1.15"/><path d="M0.6 13.2 L0.6 9.8 C0.6 8.1 1.6 7.3 3.1 7.3 L7.4 7.3 C8.9 7.3 9.9 8.1 9.9 9.8 L9.9 13.2 Z" fill="none" stroke="#151515" stroke-width="1.2" stroke-linejoin="round"/></svg>
<div class="prev" style="left:1293px;top:750px"></div>
<div class="t date" style="left:1306px;top:754px;letter-spacing:-0.2px">Preview</div>
<svg style="left:1394px;top:765px" width="15" height="3" viewBox="0 0 15 3"><circle cx="1.2" cy="1.2" r="1.2" fill="#4a4a4a"/><circle cx="7.2" cy="1.2" r="1.2" fill="#4a4a4a"/><circle cx="13.2" cy="1.2" r="1.2" fill="#4a4a4a"/></svg>
<div class="hl" style="left:322px;top:790px;width:1103px"></div>
<div class="a" style="left:325px;top:447px;width:1110px;height:48px;border:2px solid #ff0026"></div>
</body></html>
